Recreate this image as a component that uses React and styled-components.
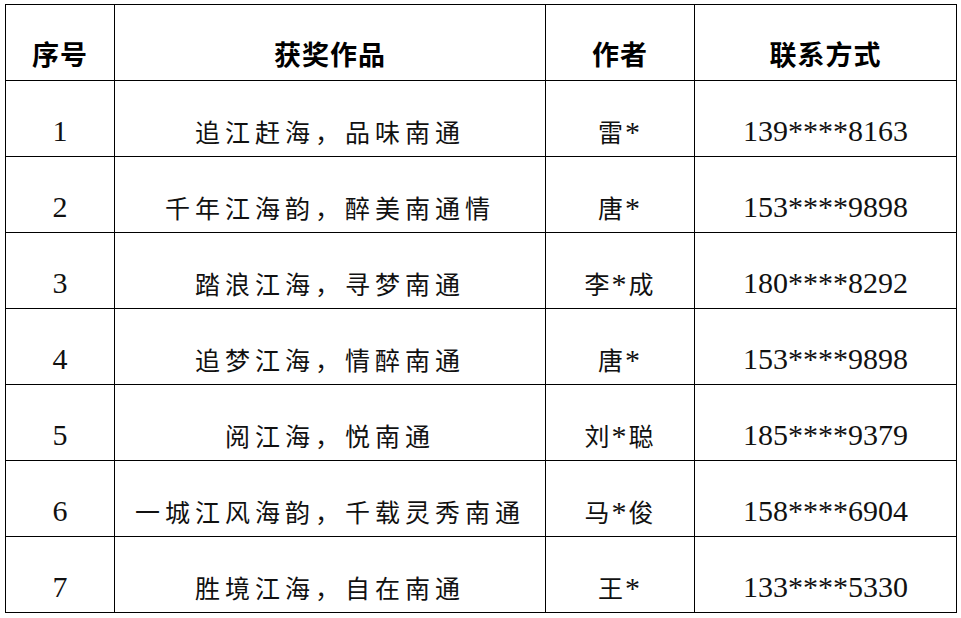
import React from "react";
import styled, { createGlobalStyle } from "styled-components";

const GlobalStyle = createGlobalStyle`
  html, body {
    margin: 0;
    padding: 0;
    background: #ffffff;
  }
`;

const Page = styled.div`
  padding: 4px 0 0 5px;
`;

const Table = styled.table`
  border-collapse: collapse;
  table-layout: fixed;
  width: 951px;
  color: #000;
`;

const Col = styled.col`
  width: ${(p) => p.$w}px;
`;

const Row = styled.tr`
  height: 76px;
`;

const HeadCell = styled.th`
  border: 1.5px solid #000;
  padding: 22px 0 0;
  text-align: center;
  vertical-align: middle;
  font-family: "Noto Sans CJK SC", sans-serif;
  font-weight: 700;
  font-size: 27px;
  letter-spacing: 1px;
`;

// $kind: "num" | "text" | "name"
const Cell = styled.td`
  border: 1.5px solid #000;
  padding: 25px 0 0;
  text-align: center;
  vertical-align: middle;
  white-space: nowrap;
  font-family: "Liberation Serif", "Noto Sans CJK SC", serif;
  font-size: ${(p) => (p.$kind === "num" ? "30px" : "25px")};
  font-weight: 400;
  letter-spacing: ${(p) =>
    p.$kind === "num" ? "0" : p.$kind === "name" ? "2px" : "5px"};
  color: #111;
`;

const Star = styled.span`
  font-size: 30px;
`;

const rows = [
  ["1", "追江赶海，品味南通", "雷*", "139****8163"],
  ["2", "千年江海韵，醉美南通情", "唐*", "153****9898"],
  ["3", "踏浪江海，寻梦南通", "李*成", "180****8292"],
  ["4", "追梦江海，情醉南通", "唐*", "153****9898"],
  ["5", "阅江海，悦南通", "刘*聪", "185****9379"],
  ["6", "一城江风海韵，千载灵秀南通", "马*俊", "158****6904"],
  ["7", "胜境江海，自在南通", "王*", "133****5330"],
];

const Author = ({ name }) => {
  const [a, b] = name.split("*");
  return (
    <>
      {a}
      <Star>*</Star>
      {b}
    </>
  );
};

export default function App() {
  return (
    <Page>
      <GlobalStyle />
      <Table>
        <colgroup>
          <Col $w={109} />
          <Col $w={431} />
          <Col $w={149} />
          <Col $w={262} />
        </colgroup>
        <thead>
          <Row>
            <HeadCell>序号</HeadCell>
            <HeadCell>获奖作品</HeadCell>
            <HeadCell>作者</HeadCell>
            <HeadCell>联系方式</HeadCell>
          </Row>
        </thead>
        <tbody>
          {rows.map(([n, title, author, phone]) => (
            <Row key={n}>
              <Cell $kind="num">{n}</Cell>
              <Cell $kind="text">{title}</Cell>
              <Cell $kind="name">
                <Author name={author} />
              </Cell>
              <Cell $kind="num">{phone}</Cell>
            </Row>
          ))}
        </tbody>
      </Table>
    </Page>
  );
}
